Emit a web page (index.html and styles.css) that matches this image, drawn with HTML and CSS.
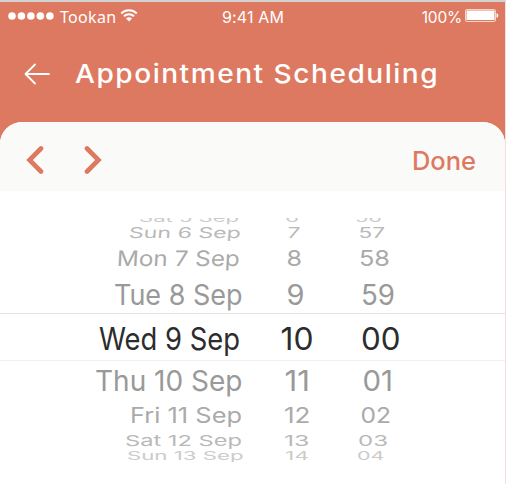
FILE: index.html
```
<!DOCTYPE html>
<html lang="en">
<head>
<meta charset="utf-8">
<title>Appointment Scheduling</title>
<link rel="stylesheet" href="styles.css">
</head>
<body>
<div class="screen">
  <header class="header">
    <div class="status">
      <div class="carrier">
        <svg class="signal" width="46" height="8" viewBox="0 0 46 8"><circle cx="4" cy="4" r="3.8"/><circle cx="13.4" cy="4" r="3.8"/><circle cx="22.9" cy="4" r="3.8"/><circle cx="32.4" cy="4" r="3.8"/><circle cx="41.9" cy="4" r="3.8"/></svg>
        <span class="carrier-name">Tookan</span>
        <svg class="wifi" width="18" height="13" viewBox="0 0 18 13"><path d="M1.2 4.4a11.4 11.4 0 0 1 15.6 0M4 7.3a7.4 7.4 0 0 1 10 0"/><path class="solid" d="M6 9.6a4.6 4.6 0 0 1 6 0L9 12.5z"/></svg>
      </div>
      <span class="clock">9:41 AM</span>
      <div class="power">
        <span class="percent">100%</span>
        <svg class="battery" width="34" height="14" viewBox="0 0 34 14"><rect class="case" x=".5" y=".5" width="30" height="12" rx="1.5"/><rect class="fill" x="1.500" y="1.500" width="28" height="9.500"/><path class="fill" d="M31.5 4.300c2.400.3 2.400 4.200 0 4.500z"/></svg>
      </div>
    </div>
    <div class="titlebar">
      <svg class="back" width="26" height="22" viewBox="0 0 26 22"><path d="M25 11H1.5M11 1.5L1.5 11l9.500 9.500"/></svg>
      <h1>Appointment Scheduling</h1>
    </div>
  </header>
  <main class="sheet">
    <div class="toolbar">
      <svg class="chevron" width="18" height="28" viewBox="0 0 18 28"><path d="M15 2.500L3.500 14 15 25.500"/></svg>
      <svg class="chevron next" width="18" height="28" viewBox="0 0 18 28"><path d="M3 2.500L14.500 14 3 25.500"/></svg>
      <span class="done">Done</span>
    </div>
    <div class="wheel">
      <svg class="row far clip" height="7" viewBox="0 218 506 7"><g font-size="12"><text x="139" y="222" textLength="100">Sat 5 Sep</text><text x="285" y="222" textLength="14">6</text><text x="355" y="222" textLength="27">56</text></g></svg>
      <svg class="row far2" height="18" viewBox="0 225 506 18"><g font-size="15"><text transform="translate(128.500 238) skewX(-5)" textLength="112">Sun 6 Sep</text><text transform="translate(287 238) skewX(-5)" textLength="12.500">7</text><text x="358.500" y="238" textLength="26.500">57</text></g></svg>
      <svg class="row mid" height="30" viewBox="0 243 506 30"><g font-size="21.500"><text transform="translate(116.500 266) skewX(-3)" textLength="123">Mon 7 Sep</text><text x="286.500" y="266" textLength="15.500">8</text><text x="359" y="266" textLength="31">58</text></g></svg>
      <svg class="row near" height="40" viewBox="0 273 506 40"><g font-size="28"><text x="114" y="305" textLength="128.500">Tue 8 Sep</text><text x="286.500" y="305" textLength="18">9</text><text x="361" y="305" textLength="34">59</text></g></svg>
      <svg class="row current" height="46" viewBox="0 314 506 46"><g font-size="30.500"><text x="99" y="350" textLength="141">Wed 9 Sep</text><text x="280.500" y="350" textLength="33">10</text><text x="361" y="350" textLength="39.500">00</text></g></svg>
      <svg class="row near" height="38" viewBox="0 361 506 38"><g font-size="28.500"><text x="95" y="391" textLength="147.500">Thu 10 Sep</text><text x="284.500" y="391" textLength="25.500">11</text><text x="362.500" y="391" textLength="30.500">01</text></g></svg>
      <svg class="row mid" height="30" viewBox="0 399 506 30"><g font-size="21"><text x="130" y="423" textLength="112">Fri 11 Sep</text><text x="284" y="423" textLength="26.500">12</text><text x="360.500" y="423" textLength="30.500">02</text></g></svg>
      <svg class="row far2" height="20" viewBox="0 429 506 20"><g font-size="15"><text x="125" y="446" textLength="117">Sat 12 Sep</text><text x="284" y="446" textLength="25.500">13</text><text x="358" y="446" textLength="30">03</text></g></svg>
      <svg class="row far clip" height="13" viewBox="0 449 506 13"><g font-size="11.500"><text x="127" y="460" textLength="116.500">Sun 13 Sep</text><text x="285" y="460" textLength="24">14</text><text x="357" y="460" textLength="27.500">04</text></g></svg>
    </div>
  </main>
</div>
<script src="wheel.js"></script>
</body>
</html>
```
FILE: styles.css
```
* { box-sizing: border-box; }
body { margin: 0; background: #fff; font-family: Inter, "Liberation Sans", sans-serif; }
.screen { width: 506px; height: 484px; overflow: hidden; background: linear-gradient(#de7961 0 150px, #fff 150px); border-top: 2px solid #d4d3d2; border-right: 1px solid #f3dfdb; }
svg { display: block; flex: none; }
.header { height: 120px; color: #fff; }
.status { display: grid; grid-template-columns: 1fr auto 1fr; height: 30px; padding: 0 7px 0 8px; align-items: center; font-size: 16px; }
.carrier, .power { display: flex; align-items: center; }
.carrier-name { margin-left: 6px; font-family: "Noto Sans", sans-serif; font-size: 16px; letter-spacing: .3px; }
.signal, .fill, .solid { fill: #fff; }
.signal { margin-bottom: 2px; }
.wifi { margin-left: 4px; margin-bottom: 4px; }
.wifi path { fill: none; stroke: #fff; stroke-width: 2; }
.wifi .solid { fill: #fff; stroke: none; }
.clock { letter-spacing: .15px; }
.power { justify-content: flex-end; gap: 3px; margin-right: -1px; }
.percent { font-size: 15.5px; letter-spacing: -.2px; }
.battery { margin-bottom: 2px; }
.case { fill: none; stroke: #f6d5cd; }
.titlebar { display: flex; align-items: center; height: 84px; padding-left: 24px; }
.back path { fill: none; stroke: #fff; stroke-width: 1.8; stroke-linecap: round; stroke-linejoin: round; }
h1 { margin: 0 0 0 25px; font-size: 26px; line-height: 32px; font-weight: 500; letter-spacing: 1.4px; white-space: nowrap; transform: scaleX(1.08); transform-origin: left center; }
.sheet { height: 362px; background: #fff; border-radius: 22px 22px 0 0; overflow: hidden; }
.toolbar { display: flex; align-items: center; height: 69px; padding: 7px 29px 0 26px; background: #fafaf8; }
.chevron path { fill: none; stroke: #de7961; stroke-width: 4.6; stroke-linecap: round; stroke-linejoin: miter; }
.next { margin-left: 40px; }
.done { margin-left: auto; color: #de7961; font-size: 25.5px; font-weight: 500; }
.wheel { padding-top: 27px; }
.row { width: 506px; overflow: visible; }
.clip { overflow: hidden; }
.current { box-sizing: content-box; border-top: 1px solid #e5e5e5; border-bottom: 1px solid #f0f0f0; fill: #2c2c2c; }
.near { fill: #999; }
.mid { fill: #aaa; }
.far2 { fill: #b9b9b9; }
.far { fill: #cbcbcb; }
```
FILE: wheel.js
```
document.querySelectorAll('.wheel text').forEach(function (label) {
  label.setAttribute('lengthAdjust', 'spacingAndGlyphs');
});
```
